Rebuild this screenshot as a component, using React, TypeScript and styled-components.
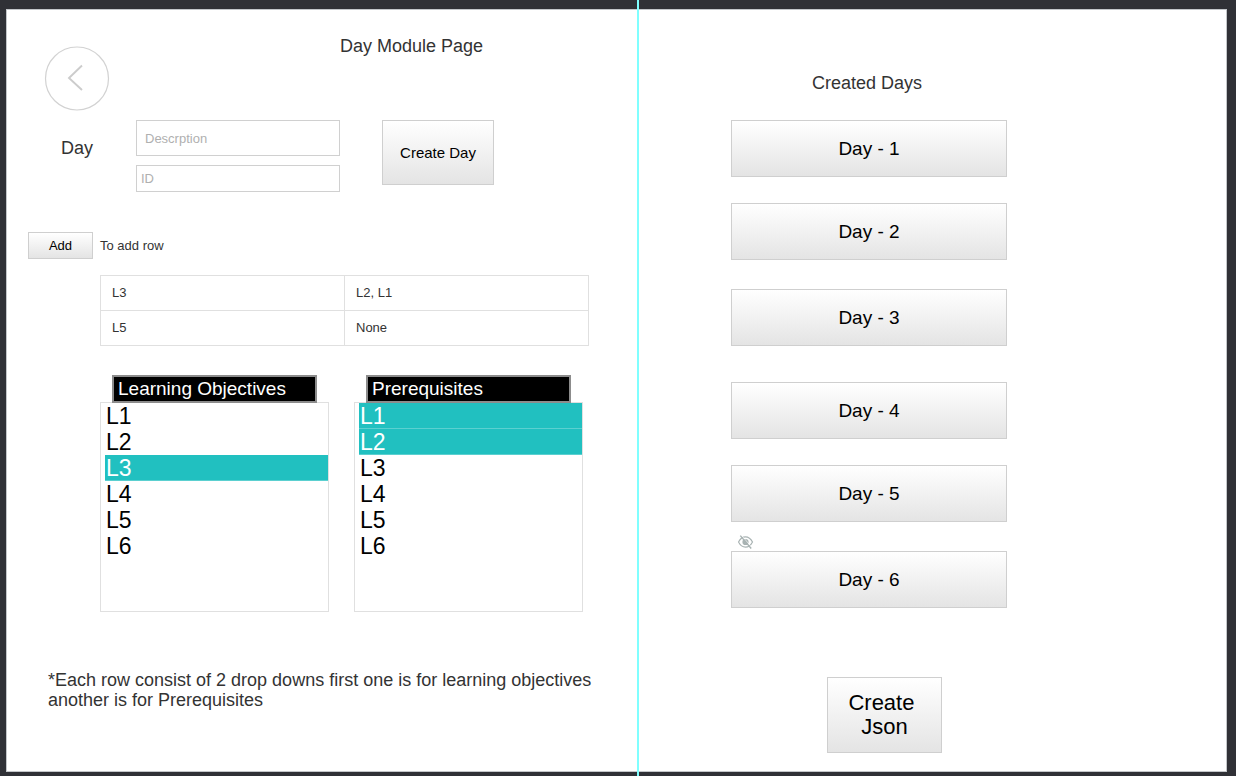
import React from 'react';
import styled, { createGlobalStyle } from 'styled-components';

const GlobalStyle = createGlobalStyle`
  *, *::before, *::after { box-sizing: border-box; }
  body {
    margin: 0;
    background: #303136;
    color: #333;
    font: 13px/20px "Liberation Sans", Arial, sans-serif;
  }
  button, input, select { font-family: inherit; }
`;

const Board = styled.div`
  display: grid;
  grid-template-columns: minmax(0, 631fr) 2px minmax(0, 588fr);
  min-height: 100vh;
  padding: 0 9px 0 6px;
`;

const Guide = styled.div`
  background: #80ffff;
`;

const Panel = styled.section<{ $side: 'left' | 'right' }>`
  margin: 9px 0 4px;
  background: #fff;
  border: 1px solid #c3c6c9;
  border-${(p) => (p.$side === 'left' ? 'right' : 'left')}: 0;
`;

const EditorPanel = styled(Panel)`
  padding: 26px 21px 60px;
`;

const DaysPanel = styled(Panel)`
  padding: 63px 92px 18px;
`;

const Heading = styled.h1`
  margin: 0;
  font-size: 18px;
  line-height: 20px;
  font-weight: 400;
`;

const Header = styled.header`
  display: flex;
  align-items: flex-start;
  gap: 231px;
  padding-left: 17px;
`;

const BackButton = styled.button`
  flex: none;
  width: 64px;
  height: 64px;
  margin-top: 11px;
  padding: 0;
  border: 0;
  background: none;

  svg { display: block; overflow: visible; }
`;

const PushButton = styled.button<{ $width: number; $height: number; $size: number }>`
  flex: none;
  width: ${(p) => p.$width}px;
  height: ${(p) => p.$height}px;
  padding: 0;
  border: 1px solid #cfcfcf;
  background: linear-gradient(#fff, #e4e4e4);
  color: #000;
  font-size: ${(p) => p.$size}px;
  line-height: 24px;
  white-space: pre;
`;

const DayForm = styled.form`
  display: flex;
  align-items: flex-start;
  margin-top: 9px;
  padding-left: 33px;
`;

const DayLabel = styled.label`
  width: 75px;
  padding-top: 18px;
  font-size: 18px;
`;

const Fields = styled.div`
  display: flex;
  flex-direction: column;
  gap: 9px;
  width: 204px;
  margin-right: 42px;
`;

const TextInput = styled.input<{ $height: number; $inset: number }>`
  width: 100%;
  height: ${(p) => p.$height}px;
  padding: 0 ${(p) => p.$inset}px;
  border: 1px solid #d0d0d0;
  font-size: 13px;
  color: #333;

  &::placeholder { color: #b0b0b0; opacity: 1; }
`;

const AddRow = styled.div`
  display: flex;
  align-items: center;
  gap: 7px;
  margin-top: 40px;
`;

const RowTable = styled.table`
  width: 489px;
  margin: 16px 0 0 72px;
  border-collapse: collapse;
  table-layout: fixed;

  td {
    height: 35px;
    padding: 0 11px;
    border: 1px solid #e0e0e0;
  }
`;

const Pickers = styled.div`
  display: flex;
  gap: 25px;
  margin: 29px 0 0 72px;
`;

const Picker = styled.div`
  display: flex;
  flex-direction: column;
  width: 229px;
`;

const PickerLabel = styled.label`
  z-index: 1;
  width: 205px;
  height: 28px;
  margin: 0 0 -1px 12px;
  padding: 0 4px;
  border: 2px solid #8c8c8c;
  background: #000;
  color: #fff;
  font-size: 19px;
  line-height: 24px;
`;

const PickerList = styled.select`
  height: 210px;
  padding: 0 0 0 4px;
  border: 1px solid #e0e0e0;
  border-radius: 0;
  outline: 0;
  background: #fff;
  overflow: hidden;
  font-size: 23px;

  option {
    height: 26px;
    min-height: 26px;
    padding: 0 1px;
    line-height: 26px;
    color: #000;
    -webkit-text-fill-color: #000;
  }

  option:checked {
    background: linear-gradient(#21c0c0 25px, #5bd0d0 25px);
    -webkit-text-fill-color: #fff;
  }
`;

const Note = styled.p`
  max-width: 560px;
  margin: 58px 0 0 20px;
  font-size: 18px;
  line-height: 20px;
`;

const DaysHeading = styled(Heading)`
  padding-left: 81px;
`;

const DayList = styled.ul`
  width: 276px;
  margin: 27px 0 69px;
  padding: 0;
  list-style: none;
`;

const DayItem = styled.li<{ $space: number }>`
  padding-top: ${(p) => p.$space}px;

  > button { display: block; }
`;

const HideButton = styled.button`
  width: 16px;
  height: 14px;
  margin: 0 0 2px 7px;
  padding: 0;
  border: 0;
  background: none;

  svg { display: block; }
`;

const ExportRow = styled.div`
  padding-left: 96px;
`;

const objectives = ['L1', 'L2', 'L3', 'L4', 'L5', 'L6'];

const rows = [
  ['L3', 'L2, L1'],
  ['L5', 'None'],
];

const days = [
  { name: 'Day - 1', space: 0 },
  { name: 'Day - 2', space: 26 },
  { name: 'Day - 3', space: 29 },
  { name: 'Day - 4', space: 36 },
  { name: 'Day - 5', space: 26 },
  { name: 'Day - 6', space: 13, hidden: true },
];

function ObjectivePicker({ id, label, selected }: { id: string; label: string; selected: string[] }) {
  return (
    <Picker>
      <PickerLabel htmlFor={id}>{label}</PickerLabel>
      <PickerList id={id} multiple size={8} defaultValue={selected}>
        {objectives.map((o) => (
          <option key={o} value={o}>{o}</option>
        ))}
      </PickerList>
    </Picker>
  );
}

export default function App() {
  return (
    <>
      <GlobalStyle />
      <Board>
        <EditorPanel $side="left">
          <Header>
            <BackButton type="button" aria-label="Back">
              <svg width="64" height="64" viewBox="0 0 64 64" fill="none">
                <circle cx="32" cy="31.5" r="31.5" stroke="#d2d2d2" strokeWidth="1.2" />
                <path d="M37 18.500 24 31 37 43" stroke="#ccc" strokeWidth="1.900" />
              </svg>
            </BackButton>
            <Heading>Day Module Page</Heading>
          </Header>

          <DayForm onSubmit={(e) => e.preventDefault()}>
            <DayLabel htmlFor="description">Day</DayLabel>
            <Fields>
              <TextInput id="description" placeholder="Descrption" $height={36} $inset={8} />
              <TextInput aria-label="ID" placeholder="ID" $height={27} $inset={4} />
            </Fields>
            <PushButton $width={112} $height={65} $size={15}>Create Day</PushButton>
          </DayForm>

          <AddRow>
            <PushButton type="button" $width={65} $height={27} $size={13}>Add</PushButton>
            <span>To add row</span>
          </AddRow>

          <RowTable>
            <tbody>
              {rows.map(([objective, prerequisites]) => (
                <tr key={objective}>
                  <td>{objective}</td>
                  <td>{prerequisites}</td>
                </tr>
              ))}
            </tbody>
          </RowTable>

          <Pickers>
            <ObjectivePicker id="objectives" label="Learning Objectives" selected={['L3']} />
            <ObjectivePicker id="prerequisites" label="Prerequisites" selected={['L1', 'L2']} />
          </Pickers>

          <Note>
            *Each row consist of 2 drop downs first one is for learning objectives another is for Prerequisites
          </Note>
        </EditorPanel>

        <Guide />

        <DaysPanel $side="right">
          <DaysHeading as="h2">Created Days</DaysHeading>
          <DayList>
            {days.map((day) => (
              <DayItem key={day.name} $space={day.space}>
                {day.hidden && (
                  <HideButton type="button" aria-label="Hidden">
                    <svg width="16" height="14" viewBox="0 0 16 14" fill="none" stroke="#a9b3b3">
                      <path d="M.5 7C2.300 3.500 4.800 1.800 7.500 1.800S12.700 3.500 14.500 7C12.700 10.500 10.200 12.200 7.500 12.200S2.300 10.500.5 7Z" strokeWidth="1.200" />
                      <circle cx="7.500" cy="7" r="3.100" fill="#a9b3b3" stroke="none" />
                      <path d="M3.500.5 14 12.500" stroke="#fff" strokeWidth=".7" />
                      <path d="M2.300.6 13.200 13.500" strokeWidth="1.400" />
                    </svg>
                  </HideButton>
                )}
                <PushButton type="button" $width={276} $height={57} $size={19}>{day.name}</PushButton>
              </DayItem>
            ))}
          </DayList>
          <ExportRow>
            <PushButton type="button" $width={115} $height={76} $size={22}>{'Create \nJson'}</PushButton>
          </ExportRow>
        </DaysPanel>
      </Board>
    </>
  );
}
